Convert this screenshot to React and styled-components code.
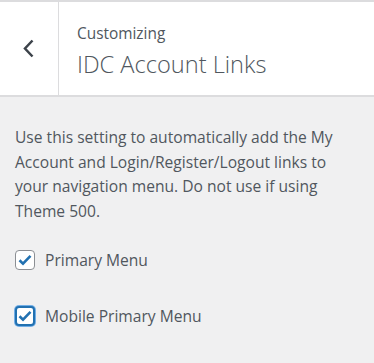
import styled, { createGlobalStyle } from 'styled-components'

const GlobalStyle = createGlobalStyle`
  body {
    margin: 0;
    background: #f0f0f1;
    font-family: "Open Sans", "Noto Sans", sans-serif;
  }
`

const App = () => {
  return (
    <>
      <GlobalStyle />
      <Panel>
        <Header>
          <BackButton aria-label="Back">
            <svg width="13" height="19" viewBox="0 0 13 19">
              <path d="M10.5 1.5 L3 9.5 L10.5 17.5" fill="none" stroke="#3c434a" strokeWidth="2.5" />
            </svg>
          </BackButton>
          <TitleBlock>
            <Overline>Customizing</Overline>
            <Title>IDC Account Links</Title>
          </TitleBlock>
        </Header>
        <Body>
          <Description>
            Use this setting to automatically add the My Account and Login/Register/Logout links to
            your navigation menu. Do not use if using Theme 500.
          </Description>
          <Option>
            <Box />
            <Label>Primary Menu</Label>
          </Option>
          <Option>
            <Box focused />
            <Label>Mobile Primary Menu</Label>
          </Option>
        </Body>
      </Panel>
    </>
  )
}

const Box = ({ focused }) => (
  <CheckBox $focused={focused}>
    <svg width="14" height="12" viewBox="0 0 14 12">
      <path d="M1.5 6.2 L5 9.6 L12.5 1.8" fill="none" stroke="#2271b1" strokeWidth="2.6" />
    </svg>
  </CheckBox>
)

export default App

const Panel = styled.div`
  width: 374px;
  min-height: 363px;
  border-top: 2px solid #dcdcde;
  box-sizing: border-box;
`

const Header = styled.div`
  display: flex;
  height: 93px;
  background: #fff;
  border-bottom: 2px solid #dcdcde;
`

const BackButton = styled.div`
  width: 59px;
  border-right: 1px solid #dcdcde;
  display: flex;
  align-items: center;
  justify-content: center;
  padding-right: 2px;
  box-sizing: border-box;
`

const TitleBlock = styled.div`
  display: flex;
  flex-direction: column;
  padding: 20px 0 0 18px;
`

const Overline = styled.div`
  font-size: 15.4px;
  line-height: 24px;
  color: #50575e;
`

const Title = styled.div`
  font-size: 23.6px;
  line-height: 36px;
  color: #50575e;
  font-weight: 300;
`

const Body = styled.div`
  padding: 28px 15px 0 15px;
`

const Description = styled.p`
  margin: 0 0 25px;
  font-size: 15.6px;
  line-height: 24.5px;
  color: #50575e;
`

const Option = styled.div`
  display: flex;
  align-items: center;
  gap: 10px;
  height: 24px;
  margin-bottom: 32px;
`

const CheckBox = styled.span`
  width: 20px;
  height: 20px;
  box-sizing: border-box;
  border-radius: 4px;
  background: #fff;
  border: ${p => (p.$focused ? '2px solid #2271b1' : '1px solid #8c8f94')};
  box-shadow: ${p => (p.$focused ? '0 0 0 1px #72aee6' : 'none')};
  display: flex;
  align-items: center;
  justify-content: center;
`

const Label = styled.span`
  font-size: 15.6px;
  color: #50575e;
`
